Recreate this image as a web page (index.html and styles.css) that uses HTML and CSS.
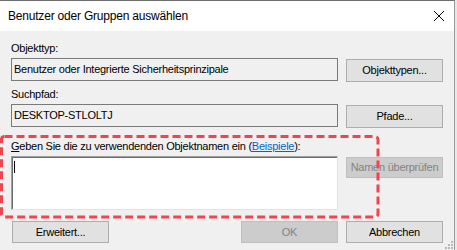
FILE: index.html
```html
<!DOCTYPE html>
<html lang="de">
<head>
<meta charset="utf-8">
<title>Benutzer oder Gruppen auswählen</title>
<link rel="stylesheet" href="styles.css">
</head>
<body>
<div class="window">
  <div class="titlebar">
    <span class="title">Benutzer oder Gruppen auswählen</span>
    <svg class="close" width="12" height="12" viewBox="0 0 12 12"><path d="M1 1 L11 11 M11 1 L1 11" stroke="#000" stroke-width="1" fill="none"/></svg>
  </div>
  <div class="content">
    <div class="label">Objekttyp:</div>
    <div class="row">
      <div class="field">Benutzer oder Integrierte Sicherheitsprinzipale</div>
      <button class="btn">Objekttypen...</button>
    </div>
    <div class="label second">Suchpfad:</div>
    <div class="row">
      <div class="field">DESKTOP-STLOLTJ</div>
      <button class="btn">Pfade...</button>
    </div>
    <div class="label third"><u>G</u>eben Sie die zu verwendenden Objektnamen ein (<a class="link" href="#">Beispiele</a>):</div>
    <div class="row">
      <div class="input"><span class="caret"></span></div>
      <button class="btn disabled check" disabled>Namen überprüfen</button>
    </div>
    <div class="footer">
      <button class="btn advanced">Erweitert...</button>
      <div class="spacer"></div>
      <button class="btn disabled" disabled>OK</button>
      <button class="btn">Abbrechen</button>
    </div>
  </div>
  <svg class="annotation" width="381" height="86" viewBox="0 0 381 86"><rect x="1.5" y="1.5" width="376.5" height="80.5" rx="3" ry="3" fill="none" stroke="#f2434f" stroke-width="3" stroke-dasharray="8 4"/></svg>
  <svg class="grip" width="9" height="9" viewBox="0 0 9 9" fill="#b9b9b9">
    <rect x="6" y="0" width="2" height="2"/>
    <rect x="3" y="3" width="2" height="2"/><rect x="6" y="3" width="2" height="2"/>
    <rect x="0" y="6" width="2" height="2"/><rect x="3" y="6" width="2" height="2"/><rect x="6" y="6" width="2" height="2"/>
  </svg>
</div>
</body>
</html>
```
FILE: styles.css
```css
html, body {
  margin: 0;
  padding: 0;
}
body {
  width: 457px;
  height: 250px;
  overflow: hidden;
  background: #e8e8e8;
  font-family: "Liberation Sans", Arial, sans-serif;
  font-size: 11px;
  letter-spacing: -0.25px;
  color: #000;
}
.window {
  position: relative;
  width: 455px;
  height: 250px;
  box-sizing: border-box;
  border-top: 1px solid #6e6e6e;
  border-right: 1px solid #9a9a9a;
  background: #f0f0f0;
}
.titlebar {
  height: 30px;
  background: #fff;
  display: flex;
  align-items: flex-start;
  justify-content: space-between;
  box-sizing: border-box;
  padding: 8px 9px 0 8px;
  line-height: 15px;
  font-size: 12px;
  letter-spacing: -0.2px;
}
.close {
  margin-top: 1px;
}
.content {
  padding: 10px 0 0 11px;
}
.label {
  line-height: 15px;
  height: 15px;
  margin-bottom: 2px;
  white-space: nowrap;
}
.label.second {
  margin-top: 5px;
}
.label.third {
  margin-top: 11px;
}
.link {
  color: #0066cc;
  text-decoration: underline;
}
.row {
  display: grid;
  grid-template-columns: 327px 97px;
  column-gap: 8px;
  align-items: start;
}
.field {
  height: 23px;
  box-sizing: border-box;
  border: 1px solid #7a7a7a;
  background: #f0f0f0;
  padding: 3px 0 0 2px;
  line-height: 15px;
  white-space: nowrap;
}
.btn {
  height: 23px;
  box-sizing: border-box;
  border: 1px solid #adadad;
  background: #e1e1e1;
  font-family: inherit;
  font-size: 11px;
  letter-spacing: -0.25px;
  color: #000;
  padding: 0;
  margin: 0;
  line-height: 15px;
  text-align: center;
  white-space: nowrap;
}
.row .btn {
  margin-top: 1px;
}
.btn.disabled {
  background: #cccccc;
  border-color: #bfbfbf;
  color: #838383;
}
.btn.check {
  height: 21px;
}
.input {
  height: 54px;
  box-sizing: border-box;
  background: #fff;
  border-style: solid;
  border-width: 1px;
  border-color: #a0a0a0 #e3e3e3 #e3e3e3 #a0a0a0;
  box-shadow: inset 1px 1px 0 #6d6d6d;
  padding: 4px 0 0 2px;
}
.caret {
  display: block;
  width: 1px;
  height: 12px;
  background: #000;
}
.footer {
  display: flex;
  width: 432px;
  margin-top: 11px;
  gap: 8px;
}
.footer .btn {
  width: 97px;
  height: 22px;
}
.footer .advanced {
  margin-left: 1px;
}
.spacer {
  flex: 1;
}
.annotation {
  position: absolute;
  left: 0;
  top: 134px;
}
.grip {
  position: absolute;
  left: 445px;
  top: 240px;
}
```
